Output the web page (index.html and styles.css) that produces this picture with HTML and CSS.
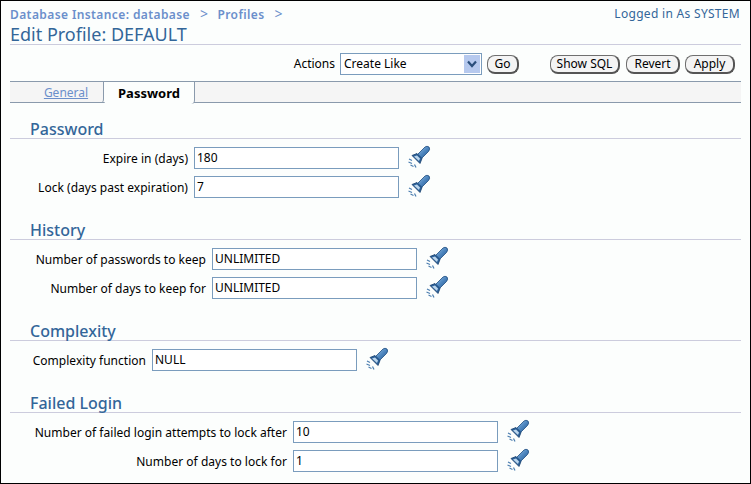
FILE: index.html
```html
<!DOCTYPE html>
<html lang="en">
<head>
<meta charset="utf-8">
<title>Edit Profile: DEFAULT</title>
<link rel="stylesheet" href="styles.css">
</head>
<body>
<svg class="defs" width="0" height="0" aria-hidden="true">
  <defs>
    <linearGradient id="barrel" x1="0" y1="0" x2="1" y2="1">
      <stop offset="0" stop-color="#a9cdec"/>
      <stop offset="0.5" stop-color="#4d86bf"/>
      <stop offset="1" stop-color="#1f4f86"/>
    </linearGradient>
    <symbol id="torch" viewBox="0 0 26 26">
      <path d="M11.5 11.5 L20 3 Q22 1.5 24 3 Q25.5 5 23.5 7.5 L15.5 15.5 Z" fill="url(#barrel)" stroke="#1d4d80" stroke-width=".8"/>
      <path d="M7 11.5 L12 9.5 L17 14.5 L15 19.5 Z" fill="#2b6098" stroke="#173f6d" stroke-width=".8"/>
      <path d="M9 12.5 L12 11.5 L15 14.5 L14 17 Z" fill="#bcd7ee"/>
      <path d="M4 15 L7 16.5 M3.5 18 L7 19.5 M5.5 21 L8.5 22.5 M9.5 20.5 L11 23.5" stroke="#4d7fb0" stroke-width="1.2" fill="none"/>
    </symbol>
  </defs>
</svg>
<div class="frame">
  <header class="top">
    <div class="crumbs-row">
      <nav class="crumbs"><a>Database Instance: database</a><span class="sep">&gt;</span><a>Profiles</a><span class="sep">&gt;</span></nav>
      <span class="user">Logged in As SYSTEM</span>
    </div>
    <h1 class="title">Edit Profile: DEFAULT</h1>
  </header>
  <div class="actions">
    <label class="actions-label">Actions</label>
    <div class="select"><span class="select-text">Create Like</span><span class="select-arrow"><svg width="10" height="8" viewBox="0 0 10 8"><path d="M1 1.5 L5 6 L9 1.5" fill="none" stroke="#2b4f7c" stroke-width="2.2"/></svg></span></div>
    <button class="btn btn-go">Go</button>
    <button class="btn btn-sql">Show SQL</button>
    <button class="btn btn-rev">Revert</button>
    <button class="btn btn-app">Apply</button>
  </div>
  <div class="tabs">
    <a class="tab tab-link">General</a>
    <span class="tab tab-on">Password</span>
  </div>
  <section class="sec">
    <h2 class="sec-title">Password</h2>
    <div class="form form-a">
      <label class="lbl">Expire in (days)</label><div class="field">180</div><svg class="ico"><use href="#torch"/></svg>
      <label class="lbl">Lock (days past expiration)</label><div class="field">7</div><svg class="ico"><use href="#torch"/></svg>
    </div>
  </section>
  <section class="sec">
    <h2 class="sec-title">History</h2>
    <div class="form form-b">
      <label class="lbl">Number of passwords to keep</label><div class="field">UNLIMITED</div><svg class="ico"><use href="#torch"/></svg>
      <label class="lbl">Number of days to keep for</label><div class="field">UNLIMITED</div><svg class="ico"><use href="#torch"/></svg>
    </div>
  </section>
  <section class="sec">
    <h2 class="sec-title">Complexity</h2>
    <div class="form form-c">
      <label class="lbl">Complexity function</label><div class="field">NULL</div><svg class="ico"><use href="#torch"/></svg>
    </div>
  </section>
  <section class="sec">
    <h2 class="sec-title">Failed Login</h2>
    <div class="form form-d">
      <label class="lbl">Number of failed login attempts to lock after</label><div class="field">10</div><svg class="ico"><use href="#torch"/></svg>
      <label class="lbl">Number of days to lock for</label><div class="field">1</div><svg class="ico"><use href="#torch"/></svg>
    </div>
  </section>
</div>
</body>
</html>
```
FILE: styles.css
```css
* { box-sizing: border-box; }
html, body { margin: 0; padding: 0; }
body { width: 751px; height: 484px; overflow: hidden; background: #fff; font-family: "Noto Sans", "DejaVu Sans", sans-serif; font-size: 12px; color: #000; }
.defs { position: absolute; }
.frame { width: 751px; height: 484px; border: 1px solid #000; padding: 0 9px; background: #fcfefd; }
.top { border-bottom: 1px solid #ccccdd; height: 44px; }
.crumbs-row { display: flex; justify-content: space-between; height: 22px; padding-top: 5px; line-height: 16px; }
.crumbs { color: #6b8fcb; font-weight: 600; font-size: 12px; letter-spacing: .4px; }
.sep { margin: 0 9px 0 10px; font-weight: 400; font-size: 14px; }
.user { color: #336699; letter-spacing: .3px; padding-right: 1px; }
.title { margin: 0; padding-top: 1px; font-size: 18px; font-weight: 400; color: #336699; line-height: 20px; height: 21px; }
.actions { display: flex; justify-content: flex-end; align-items: center; height: 36px; padding: 1px 6px 0 0; }
.actions-label { margin-right: 5px; }
.select { width: 142px; height: 22px; border: 1px solid #7a9cbd; display: flex; align-items: center; justify-content: space-between; padding: 0 1px 0 3px; background: #fff; }
.select-arrow { width: 16px; height: 18px; background: #b6c9ee; display: flex; align-items: center; justify-content: center; }
.btn { font: inherit; height: 19px; padding: 0; line-height: 14px; background: #f4f4f4; color: #000; border: 1px solid #6f6f6f; border-bottom: 2px solid #555; border-right: 2px solid #555; border-radius: 8px; margin-left: 5px; margin-top: 2px; }
.btn-go { width: 32px; margin-right: 31px; }
.btn-sql { width: 70px; margin-left: 0; margin-right: 1px; }
.btn-rev { width: 54px; }
.btn-app { width: 50px; }
.tabs { height: 22px; border-top: 1px solid #8a9aac; border-bottom: 1px solid #8a9aac; background: #f5f5f5; display: flex; }
.tab { height: 22px; display: flex; align-items: center; justify-content: center; }
.tab-link { width: 94px; padding-left: 19px; color: #6b8fcb; text-decoration: underline; border-right: 1px solid #8a9aac; border-bottom-right-radius: 4px; height: 21px; }
.tab-on { width: 91px; font-size: 13px; font-weight: 700; background: #fcfefd; border-right: 1px solid #8a9aac; border-bottom-left-radius: 4px; border-bottom-right-radius: 4px; margin-bottom: -1px; }
.sec { margin-top: 22px; }
.sec:first-of-type { margin-top: 16px; }
.sec-title { margin: 0 0 8px; padding-left: 20px; font-size: 16px; font-weight: 500; color: #336699; line-height: 20px; height: 20px; border-bottom: 1px solid #ccccdd; }
.form { display: grid; row-gap: 7px; align-items: center; }
.form-a { grid-template-columns: 184px 205px 32px; }
.form-b { grid-template-columns: 202px 205px 32px; }
.form-c { grid-template-columns: 142px 205px 32px; }
.form-d { grid-template-columns: 283px 205px 32px; }
.lbl { text-align: right; padding-right: 6px; white-space: nowrap; letter-spacing: .02px; }
.field { height: 22px; border: 1px solid #7a9cbd; background: #fff; padding-left: 2px; line-height: 20px; }
.ico { width: 26px; height: 26px; margin: -3px 0 -1px 6px; }
```
